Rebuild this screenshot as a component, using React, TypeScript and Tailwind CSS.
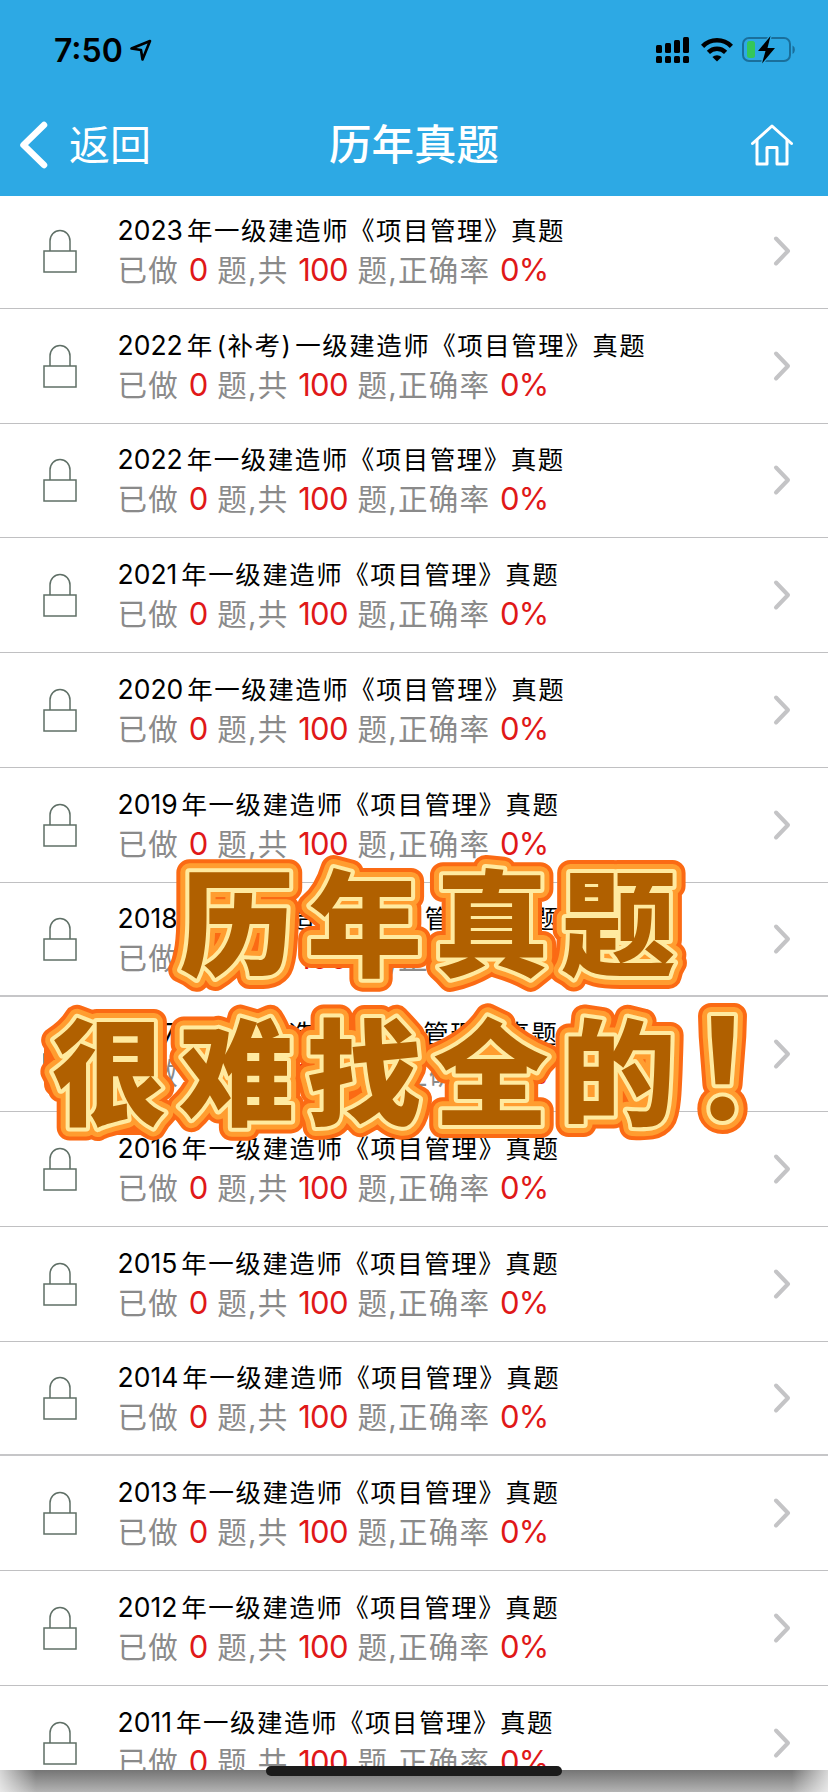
type Paper = {
  year: string;
  makeup?: boolean;
  thick?: boolean;
};

const papers: Paper[] = [
  { year: "2023" },
  { year: "2022", makeup: true },
  { year: "2022" },
  { year: "2021" },
  { year: "2020" },
  { year: "2019" },
  { year: "2018", thick: true },
  { year: "2017" },
  { year: "2016" },
  { year: "2015" },
  { year: "2014", thick: true },
  { year: "2013" },
  { year: "2012" },
  { year: "2011" },
];

function StatusBar() {
  return (
    <div className="flex h-[100px] items-center justify-between pl-[54px] pr-[32px]">
      <div className="flex items-center gap-[7px]">
        <span className="mt-[2px] text-[32px] leading-[40px] font-semibold text-black">7:50</span>
        <svg className="h-[22px] w-[22px]" viewBox="0 0 22 22" fill="none" stroke="#000" strokeWidth="2.6" strokeLinejoin="round">
          <path d="M1.5 9.5 20 2 12.5 20.5 11 11Z" />
        </svg>
      </div>
      <div className="flex items-center">
        <svg className="h-[26px] w-[34px]" viewBox="0 0 34 26" fill="#000">
          <rect x="0" y="8" width="6" height="8" rx="1.5" />
          <rect x="9" y="6" width="6" height="10" rx="1.5" />
          <rect x="18" y="3" width="6" height="13" rx="1.5" />
          <rect x="27" y="0" width="6" height="16" rx="1.5" />
          <rect x="0" y="19" width="6" height="7" rx="1.5" />
          <rect x="9" y="19" width="6" height="7" rx="1.5" />
          <rect x="18" y="19" width="6" height="7" rx="1.5" />
          <rect x="27" y="19" width="6" height="7" rx="1.5" />
        </svg>
        <svg className="ml-[10px] h-[24px] w-[34px]" viewBox="0 0 34 24" fill="none" stroke="#000" strokeWidth="4.4">
          <path d="M2.6 8.4a20 20 0 0 1 28.8 0" />
          <path d="M8.4 14.4a12 12 0 0 1 17.2 0" />
          <path d="M17 23.5 12.4 19a6.6 6.6 0 0 1 9.2 0Z" fill="#000" stroke="none" />
        </svg>
        <svg className="ml-[8px] h-[28px] w-[54px]" viewBox="0 0 54 28" fill="none">
          <rect x="1" y="2" width="47" height="23" rx="6" stroke="#1a6f9b" strokeWidth="2" />
          <rect x="5" y="5" width="8" height="17" rx="2.5" fill="#34c759" />
          <path d="M50.5 9.5a5 5 0 0 1 0 8.5Z" fill="#1a6f9b" />
          <path d="M28.5 0 16 15h7.5L20 27.5 33 12h-7.5Z" fill="#000" stroke="#2da9e4" strokeWidth="2.5" paintOrder="stroke" />
        </svg>
      </div>
    </div>
  );
}

function NavBar() {
  return (
    <div className="grid h-[90px] grid-cols-[1fr_auto_1fr] items-center px-[35px] text-white">
      <div className="-ml-[17px] flex items-center">
        <svg className="h-[48px] w-[30px]" viewBox="0 0 30 48" fill="none" stroke="#fff" strokeWidth="6.5" strokeLinecap="round" strokeLinejoin="round">
          <path d="M26 4 5.5 24 26 44" />
        </svg>
        <span className="ml-[21px] text-[41px] leading-[48px] font-normal">返回</span>
      </div>
      <h1 className="text-[42.5px] leading-[48px] font-medium">历年真题</h1>
      <svg className="h-[42px] w-[42px] justify-self-end" viewBox="0 0 42 42" fill="none" stroke="#fff" strokeWidth="3" strokeLinejoin="round">
        <path d="M1.5 19.5 21 2l19.5 17.5" strokeLinecap="round" />
        <path d="M6 16v24h10V23.5h10V40h10V16" />
      </svg>
    </div>
  );
}

function LockIcon() {
  return (
    <svg className="h-[44px] w-[34px]" viewBox="0 0 34 44" fill="none" stroke="#5f6f66" strokeWidth="1.5">
      <rect x="1" y="22" width="32" height="21" />
      <path d="M7 22V12a10 10.5 0 0 1 20 0v10" />
    </svg>
  );
}

function Count({ value }: { value: string }) {
  return <span className="text-[31px] tracking-[-0.7px] text-[#e01818]">{value}</span>;
}

function PaperRow({ paper }: { paper: Paper }) {
  return (
    <li
      className={`flex h-[114.75px] items-center pl-[43px] pr-[37px] ${
        paper.thick ? "border-b-2 border-[#c6c6c8]" : "border-b border-[#c0c0c2]"
      }`}
    >
      <LockIcon />
      <div className="-mt-px ml-[40.5px] flex-1 whitespace-nowrap">
        <p className="h-[39px] text-[25.5px] leading-[41px] text-black">
          <span className="text-[26.5px]">{paper.year}</span>
          <span className="ml-[4px] tracking-[1.5px]">
            年{paper.makeup && <span className="mx-[3px]">(补考)</span>}一级建造师《项目管理》真题
          </span>
        </p>
        <p className="text-[29.5px] leading-[41px] tracking-[1.3px] text-[#8a8a8a]">
          已做 <Count value="0" /> 题,共 <Count value="100" /> 题,正确率 <Count value="0%" />
        </p>
      </div>
      <svg className="h-[32px] w-[18px]" viewBox="0 0 18 32" fill="none" stroke="#c4c4c6" strokeWidth="4" strokeLinecap="round" strokeLinejoin="round">
        <path d="M3 3.5 15 16 3 28.5" />
      </svg>
    </li>
  );
}

// sticker lettering: outlines go underneath, the filled text last
function Caption() {
  return (
    <svg
      className="pointer-events-none absolute inset-x-0 top-[840px] z-20 h-[320px] w-full"
      viewBox="0 840 828 320"
      fontSize="115"
      fontWeight="900"
      strokeLinejoin="round"
    >
      <g fill="#fb6a14" stroke="#fb6a14" strokeWidth="26">
        <path d="M76 1026 62 1040 57 1050v34l13 10v28h78v-94Z" />
        <use href="#caption-text" />
      </g>
      <g fill="#ff9d30" stroke="#ff9d30" strokeWidth="18">
        <use href="#caption-text" />
      </g>
      <g fill="#ffeaa0" stroke="#ffeaa0" strokeWidth="8">
        <use href="#caption-text" />
      </g>
      <g fill="#b06000">
        <g id="caption-text">
          <text x="179.5 307 434 561" y="967">历年真题</text>
          <text x="52 179 306.5 433.5 561 688" y="1116">
            很难找全的<tspan fontSize="138" fontWeight="700" y="1119">！</tspan>
          </text>
        </g>
      </g>
    </svg>
  );
}

export default function App() {
  return (
    <div className="relative flex h-[1792px] w-[828px] flex-col overflow-hidden bg-white font-['Inter','Noto_Sans_CJK_SC',sans-serif]">
      <header className="relative z-10 h-[194px] shrink-0 bg-[#2da9e4] shadow-[0_2px_0_#2da9e4]">
        <StatusBar />
        <NavBar />
      </header>
      <ul className="h-[1576px] shrink-0 overflow-hidden bg-white">
        {papers.map((paper, index) => (
          <PaperRow key={index} paper={paper} />
        ))}
      </ul>
      <footer className="relative h-[22px] bg-linear-to-b from-[#757575] to-[#b4b4b4]">
        <div className="absolute inset-y-0 left-0 w-[36px] bg-linear-to-r from-white/70 to-transparent" />
        <div className="absolute inset-y-0 right-0 w-[36px] bg-linear-to-l from-white/70 to-transparent" />
        <div className="absolute -top-[4px] left-[266px] h-[10px] w-[296px] rounded-full bg-[#1b1b1b]" />
      </footer>
      <Caption />
    </div>
  );
}
